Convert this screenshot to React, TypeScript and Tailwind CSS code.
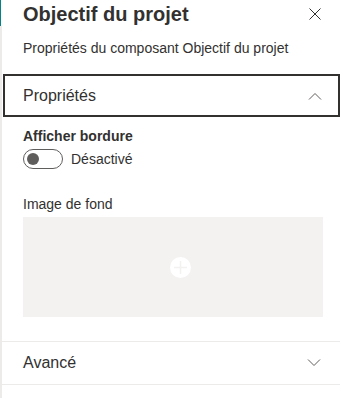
const font = { fontFamily: '"Segoe UI", "Liberation Sans", Arial, sans-serif' }

const Chevron = ({ up }: { up?: boolean }) => (
  <svg width="14" height="8" viewBox="0 0 14 8" fill="none" stroke="#605e5c" strokeWidth="1">
    {up ? <path d="M1 7.5 L7 1.5 L13 7.5" /> : <path d="M1 0.5 L7 6.5 L13 0.5" />}
  </svg>
)

const App = () => {
  return (
    <div className="flex w-[340px] h-[398px] bg-white text-[#323130]" style={font}>
      <div className="flex flex-col w-[2px] shrink-0">
        <div className="h-[26px] w-[1px] bg-[#038387]" />
        <div className="flex-1 bg-[#edebe9]" />
      </div>
      <div className="flex-1 flex flex-col">
        <div className="flex items-start justify-between pl-[21px] pr-[19px]">
          <h1 className="text-[20px] leading-[28px] font-semibold">Objectif du projet</h1>
          <svg width="12" height="12" viewBox="0 0 12 12" className="mt-[8px]" stroke="#323130" strokeWidth="1">
            <path d="M0.5 0.5 L11.5 11.5 M11.5 0.5 L0.5 11.5" />
          </svg>
        </div>
        <p className="pl-[21px] mt-[10px] text-[14px] leading-[20px]">Propriétés du composant Objectif du projet</p>
        <div className="mt-[16px] ml-[1px] h-[43px] border-2 border-[#323130] flex items-center justify-between pl-[18px] pr-[16px]">
          <span className="text-[16px]">Propriétés</span>
          <Chevron up />
        </div>
        <div className="pl-[21px] pt-[9px]">
          <div className="text-[14px] leading-[20px] font-semibold">Afficher bordure</div>
          <div className="flex items-center gap-[8px] mt-[3px]">
            <div className="w-[40px] h-[20px] rounded-full border border-[#605e5c] flex items-center pl-[3px]">
              <div className="w-[12px] h-[12px] rounded-full bg-[#605e5c]" />
            </div>
            <span className="text-[14px] leading-[20px]">Désactivé</span>
          </div>
          <div className="mt-[25px] text-[14px] leading-[20px]">Image de fond</div>
          <div className="mt-[3px] w-[300px] h-[100px] bg-[#f3f2f1] flex items-center justify-center">
            <svg width="21" height="21" viewBox="0 0 21 21" className="ml-[14px]">
              <circle cx="10.5" cy="10.5" r="10.5" fill="white" />
              <path d="M10.5 4 V17 M4 10.5 H17" stroke="#f3f2f1" strokeWidth="1.5" />
            </svg>
          </div>
        </div>
        <div className="mt-[24px] border-t border-b border-[#edebe9] h-[44px] flex items-center justify-between pl-[21px] pr-[19px]">
          <span className="text-[16px]">Avancé</span>
          <Chevron />
        </div>
      </div>
    </div>
  )
}

export default App
